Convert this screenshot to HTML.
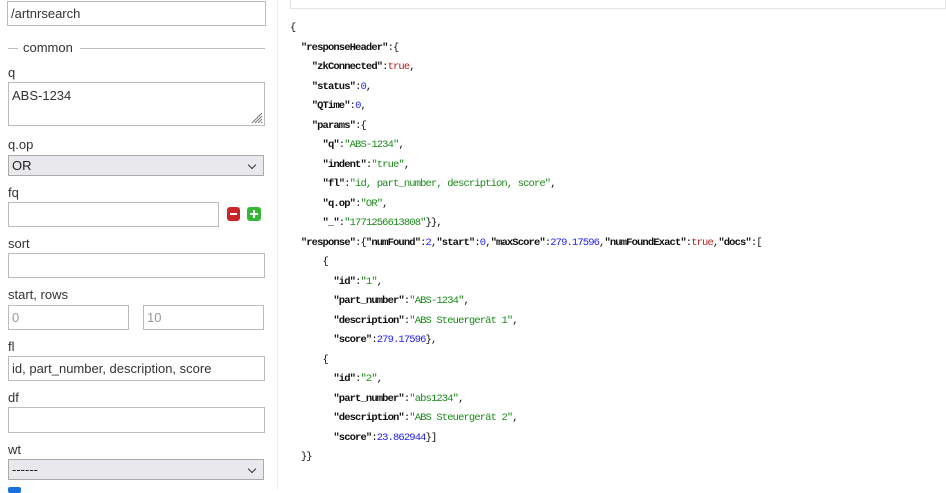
<!DOCTYPE html>
<html><head><meta charset="utf-8"><style>
*{box-sizing:border-box;margin:0;padding:0}
body{width:946px;height:490px;overflow:hidden;background:#fff;font-family:"Liberation Sans",sans-serif;font-size:13px;color:#333;position:relative}
.a{position:absolute}
.inp{position:absolute;border:1px solid #bbb;background:#fff;padding:0 3px;font-size:13px;color:#333;display:flex;align-items:center}
.sel{position:absolute;border:1px solid #aaa;background:#e9e9ed;padding:0 3px;font-size:13px;color:#222;display:flex;align-items:center}
.sel:after{content:"";position:absolute;right:8px;top:6px;width:5px;height:5px;border-right:1.5px solid #333;border-bottom:1.5px solid #333;transform:rotate(45deg)}
.lbl{position:absolute;left:8px;font-size:13px;color:#333}
pre{position:absolute;left:290px;top:19px;font-family:"Liberation Mono",monospace;font-size:10.5px;letter-spacing:-0.88px;line-height:19.5px;color:#111}
b{font-weight:bold}
.s{color:#1a8a1a}.n{color:#2222ee}.t{color:#b02020}
</style></head><body>
<div class="inp" style="left:7px;top:1px;width:259px;height:25px">/artnrsearch</div>
<div class="a" style="left:8px;top:48px;width:10px;border-top:1px solid #bbb"></div>
<div class="a" style="left:23px;top:40px;font-size:13px">common</div>
<div class="a" style="left:80px;top:48px;width:185px;border-top:1px solid #bbb"></div>
<div class="lbl" style="top:65px">q</div>
<div class="inp" style="left:8px;top:82px;width:257px;height:44px;align-items:flex-start;padding-top:5px">ABS-1234</div>
<svg class="a" style="left:250px;top:111px" width="13" height="13"><path d="M12 2L2 12M12 5L5 12M12 8L8 12M12 11L11 12" stroke="#777" stroke-width="1"/></svg>
<div class="lbl" style="top:137px">q.op</div>
<div class="sel" style="left:8px;top:155px;width:256px;height:21px">OR</div>
<div class="lbl" style="top:185px">fq</div>
<div class="inp" style="left:8px;top:202px;width:211px;height:25px"></div>
<div class="a" style="left:227px;top:207px;width:13px;height:14px;background:#c8262a;border-radius:3px"><div class="a" style="left:3px;top:6px;width:7px;height:2px;background:#fff"></div></div>
<div class="a" style="left:247px;top:207px;width:14px;height:14px;background:#35b835;border-radius:3px"><div class="a" style="left:3px;top:6px;width:8px;height:2px;background:#fff"></div><div class="a" style="left:6px;top:3px;width:2px;height:8px;background:#fff"></div></div>
<div class="lbl" style="top:236px">sort</div>
<div class="inp" style="left:8px;top:253px;width:257px;height:25px"></div>
<div class="lbl" style="top:287px">start, rows</div>
<div class="inp" style="left:8px;top:305px;width:121px;height:25px;color:#999">0</div>
<div class="inp" style="left:143px;top:305px;width:121px;height:25px;color:#999">10</div>
<div class="lbl" style="top:339px">fl</div>
<div class="inp" style="left:8px;top:356px;width:257px;height:25px">id, part_number, description, score</div>
<div class="lbl" style="top:390px">df</div>
<div class="inp" style="left:8px;top:407px;width:257px;height:26px"></div>
<div class="lbl" style="top:442px">wt</div>
<div class="sel" style="left:8px;top:459px;width:256px;height:21px">------</div>
<div class="a" style="left:8px;top:487px;width:13px;height:6px;background:#1a6fe0;border-radius:2px"></div>
<div class="a" style="left:277px;top:0;width:1px;height:490px;background:#eee"></div>
<div class="a" style="left:290px;top:0;width:656px;height:9px;border:1px solid #e2e2e2;border-top:none"></div>
<pre>{
  <b>"responseHeader"</b>:{
    <b>"zkConnected"</b>:<span class="t">true</span>,
    <b>"status"</b>:<span class="n">0</span>,
    <b>"QTime"</b>:<span class="n">0</span>,
    <b>"params"</b>:{
      <b>"q"</b>:<span class="s">"ABS-1234"</span>,
      <b>"indent"</b>:<span class="s">"true"</span>,
      <b>"fl"</b>:<span class="s">"id, part_number, description, score"</span>,
      <b>"q.op"</b>:<span class="s">"OR"</span>,
      <b>"_"</b>:<span class="s">"1771256613808"</span>}},
  <b>"response"</b>:{<b>"numFound"</b>:<span class="n">2</span>,<b>"start"</b>:<span class="n">0</span>,<b>"maxScore"</b>:<span class="n">279.17596</span>,<b>"numFoundExact"</b>:<span class="t">true</span>,<b>"docs"</b>:[
      {
        <b>"id"</b>:<span class="s">"1"</span>,
        <b>"part_number"</b>:<span class="s">"ABS-1234"</span>,
        <b>"description"</b>:<span class="s">"ABS Steuergerät 1"</span>,
        <b>"score"</b>:<span class="n">279.17596</span>},
      {
        <b>"id"</b>:<span class="s">"2"</span>,
        <b>"part_number"</b>:<span class="s">"abs1234"</span>,
        <b>"description"</b>:<span class="s">"ABS Steuergerät 2"</span>,
        <b>"score"</b>:<span class="n">23.862944</span>}]
  }}</pre>
</body></html>
